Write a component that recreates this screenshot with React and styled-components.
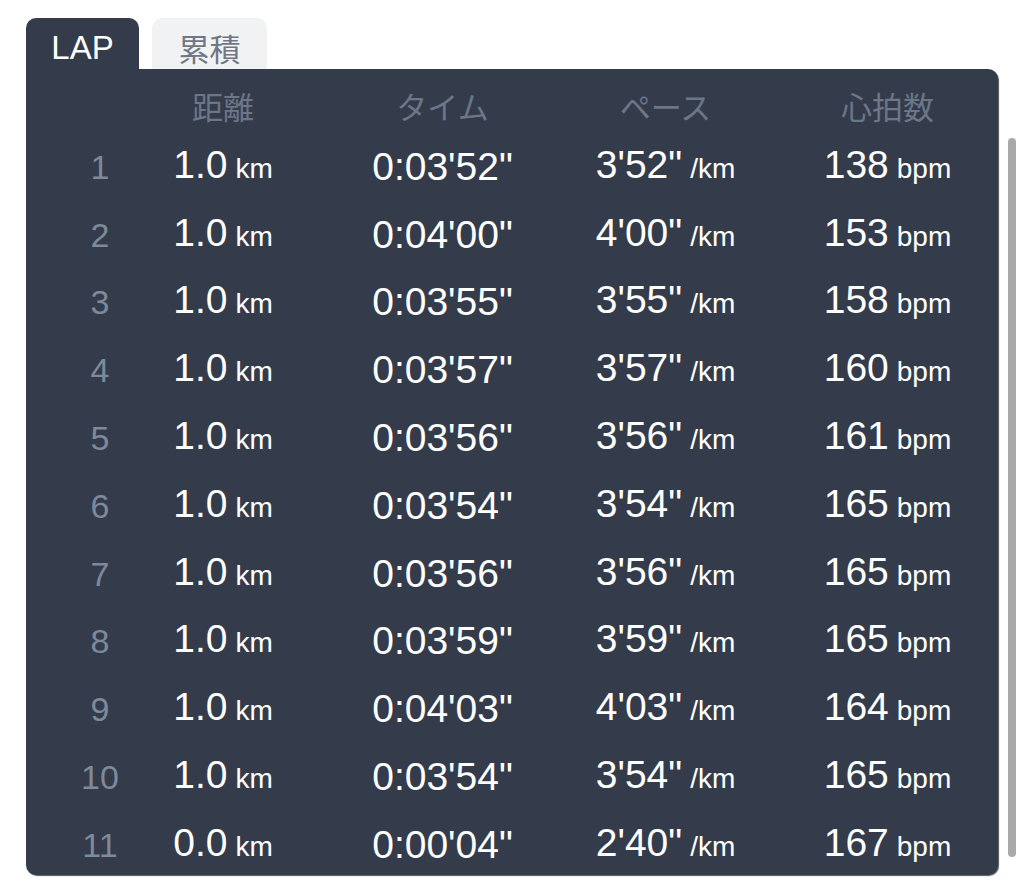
import React from "react";
import styled, { createGlobalStyle } from "styled-components";

const GlobalStyle = createGlobalStyle`
  html, body {
    margin: 0;
    padding: 0;
    background: #ffffff;
  }
  body {
    font-family: "Liberation Sans", Arial, "Noto Sans CJK JP", sans-serif;
    -webkit-font-smoothing: antialiased;
  }
`;

const laps = [
  { dist: "1.0", time: "0:03'52\"", pace: "3'52\"", hr: 138 },
  { dist: "1.0", time: "0:04'00\"", pace: "4'00\"", hr: 153 },
  { dist: "1.0", time: "0:03'55\"", pace: "3'55\"", hr: 158 },
  { dist: "1.0", time: "0:03'57\"", pace: "3'57\"", hr: 160 },
  { dist: "1.0", time: "0:03'56\"", pace: "3'56\"", hr: 161 },
  { dist: "1.0", time: "0:03'54\"", pace: "3'54\"", hr: 165 },
  { dist: "1.0", time: "0:03'56\"", pace: "3'56\"", hr: 165 },
  { dist: "1.0", time: "0:03'59\"", pace: "3'59\"", hr: 165 },
  { dist: "1.0", time: "0:04'03\"", pace: "4'03\"", hr: 164 },
  { dist: "1.0", time: "0:03'54\"", pace: "3'54\"", hr: 165 },
  { dist: "0.0", time: "0:00'04\"", pace: "2'40\"", hr: 167 },
];

const App = () => {
  return (
    <>
      <GlobalStyle />
      <Page>
        <Tabs>
          <Tab $active>LAP</Tab>
          <Tab>累積</Tab>
        </Tabs>
        <Panel>
          <HeadRow>
            <Cell $pad={24} />
            <HeadCell>距離</HeadCell>
            <HeadCell $pad={35}>タイム</HeadCell>
            <HeadCell>ペース</HeadCell>
            <HeadCell>心拍数</HeadCell>
          </HeadRow>
          {laps.map((lap, i) => (
            <Row key={i}>
              <LapNo>{i + 1}</LapNo>
              <Cell>
                {lap.dist}
                <Unit>km</Unit>
              </Cell>
              <Cell $pad={35}>{lap.time}</Cell>
              <Cell>
                {lap.pace}
                <Unit>/km</Unit>
              </Cell>
              <Cell>
                {lap.hr}
                <Unit>bpm</Unit>
              </Cell>
            </Row>
          ))}
        </Panel>
        <ScrollThumb />
      </Page>
    </>
  );
};

const Page = styled.div`
  position: relative;
  width: 1024px;
  height: 888px;
  padding: 18px 0 0 26px;
  box-sizing: border-box;
  overflow: hidden;
`;

// tabs
const Tabs = styled.div`
  display: flex;
  gap: 13px;
`;
const Tab = styled.div`
  width: ${(p) => (p.$active ? "113px" : "115px")};
  height: 51px;
  border-radius: 10px 10px 0 0;
  display: flex;
  align-items: center;
  justify-content: center;
  padding-top: 8px;
  box-sizing: border-box;
  font-size: ${(p) => (p.$active ? "33px" : "31px")};
  font-family: "Liberation Sans", Arial, "Noto Sans CJK JP", sans-serif;
  background: ${(p) => (p.$active ? "#343c4c" : "#f1f2f4")};
  color: ${(p) => (p.$active ? "#ffffff" : "#6f7784")};
`;

// table
const Panel = styled.div`
  width: 972px;
  height: 806px;
  background: #343c4c;
  border-radius: 0 10px 10px 10px;
  box-shadow: 1px 1px 1px rgba(10, 14, 22, 0.7);
  overflow: hidden;
`;
const Grid = styled.div`
  display: grid;
  grid-template-columns: 124px 146px 258px 223px 221px;
  align-items: center;
`;
const HeadRow = styled(Grid)`
  height: 64px;
  padding-top: 10px;
  box-sizing: border-box;
`;
const Row = styled(Grid)`
  height: 67.8px;
`;
const Cell = styled.div`
  text-align: center;
  white-space: nowrap;
  padding-left: ${(p) => p.$pad || 0}px;
  color: #ffffff;
  font-size: 39px;
  line-height: 54px;
`;
const HeadCell = styled(Cell)`
  font-family: "Noto Sans CJK JP", sans-serif;
  font-size: 31px;
  color: #6b7687;
`;
const LapNo = styled(Cell)`
  padding-left: 24px;
  color: #7d8a9a;
  font-size: 34px;
`;
const Unit = styled.span`
  font-size: 28px;
  margin-left: 8px;
`;

const ScrollThumb = styled.div`
  position: absolute;
  left: 1008px;
  top: 138px;
  width: 8px;
  height: 719px;
  border-radius: 4px;
  background: #a9a9a9;
`;

export default App;
